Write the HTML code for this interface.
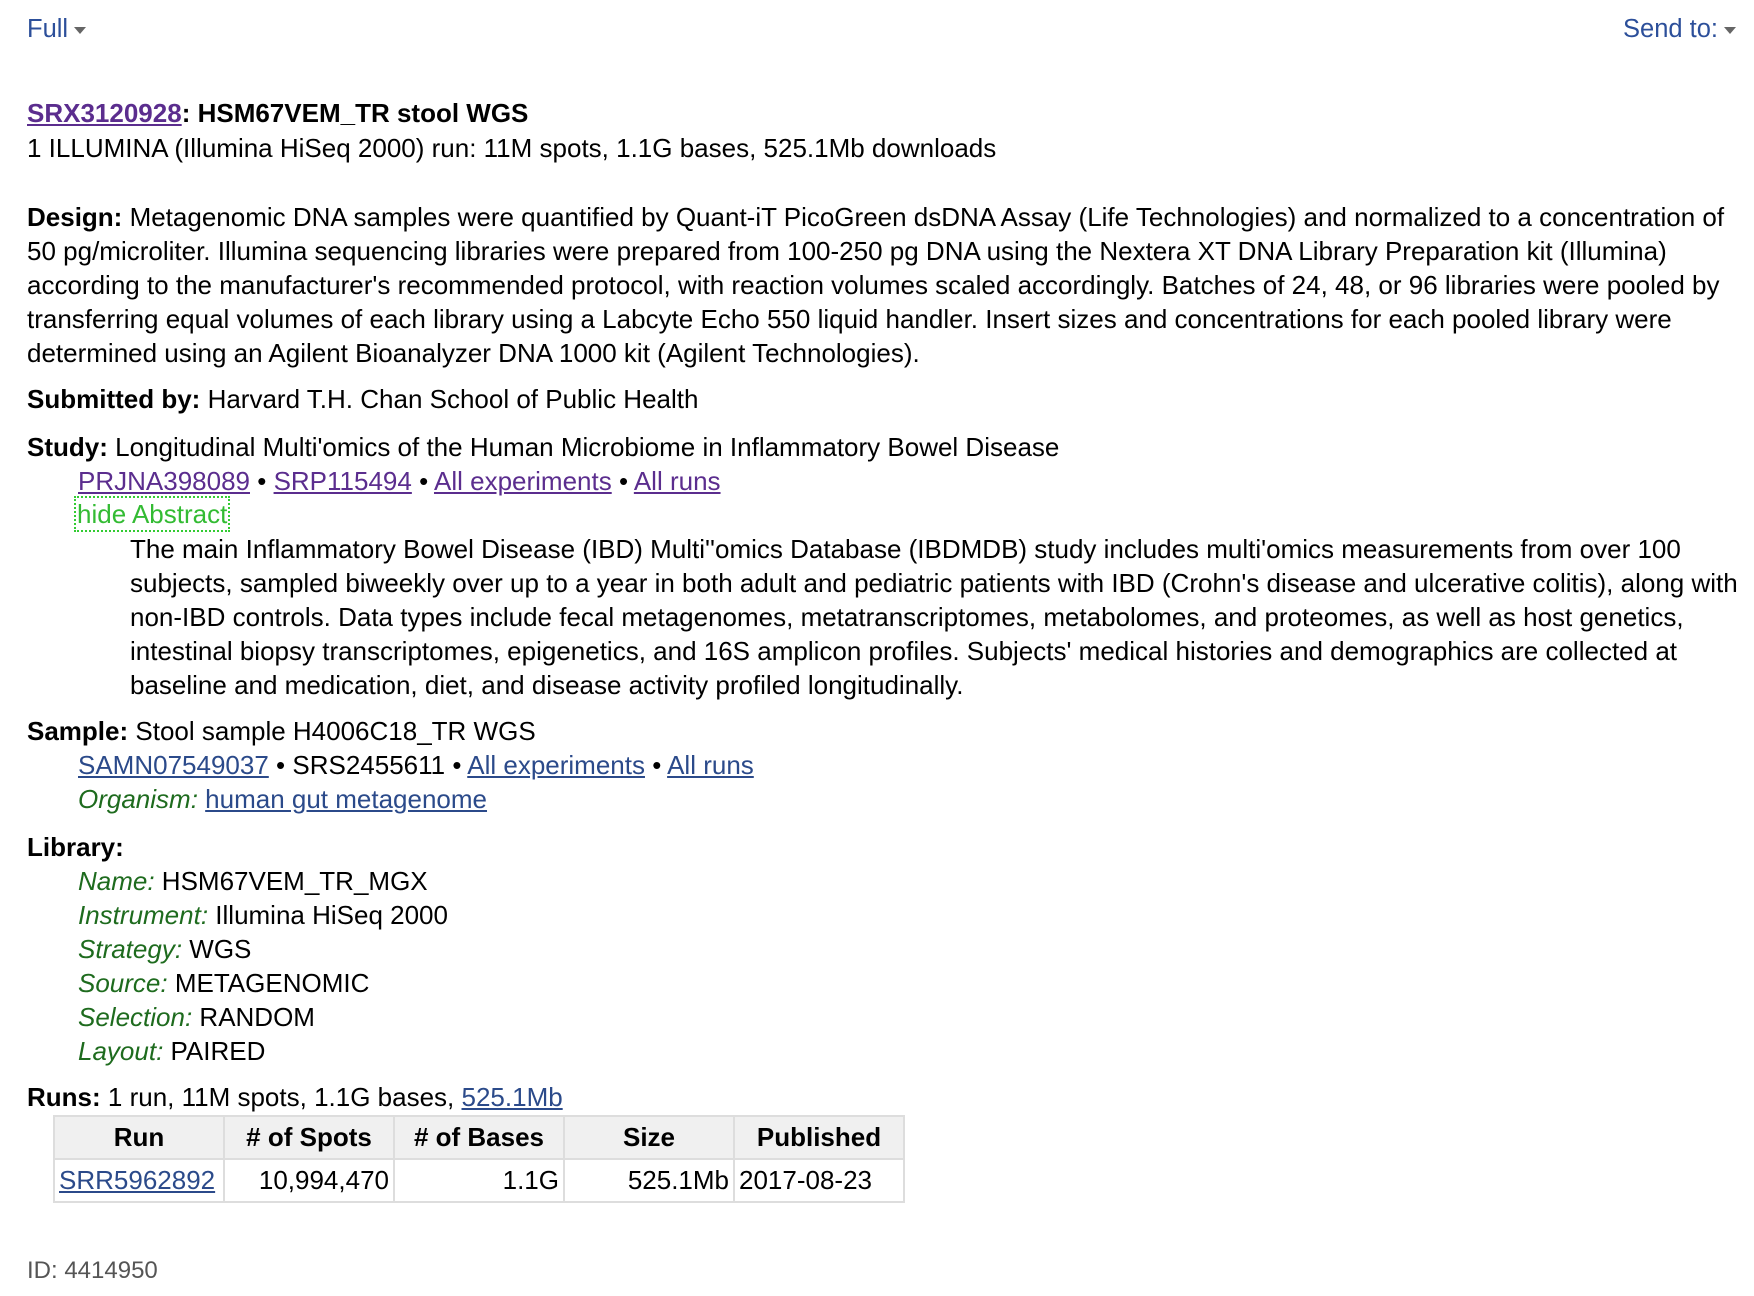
<!DOCTYPE html>
<html><head><meta charset="utf-8"><style>
body{margin:0;width:1754px;height:1296px;background:#fff;font-family:"Liberation Sans",Arial,sans-serif;font-size:26px;color:#000;position:relative;overflow:hidden}
.l{position:absolute;left:27px;line-height:34px;white-space:nowrap}
a{color:#2b4a8a;text-decoration:underline}
a.v{color:#5b2d8e}
b{font-weight:bold}
.g{color:#1e6b1e;font-style:italic}
.nav{color:#2c4f9a;position:absolute;top:15px;font-size:25.5px}
.tri{display:inline-block;width:0;height:0;border-left:6px solid transparent;border-right:6px solid transparent;border-top:7px solid #666;margin-left:6px;vertical-align:middle}
table{position:absolute;left:53px;top:1115px;border-collapse:collapse}
td,th{border:2px solid #ddd;height:41px;padding:0 4px;font-size:26px}
th{background:#f0f0f0;text-align:center}
</style></head><body>
<div class="nav" style="left:27px">Full<span class="tri"></span></div>
<div class="nav" style="right:18px">Send to:<span class="tri"></span></div>
<div class="l" style="top:96px"><b><a class="v" href="#">SRX3120928</a>: HSM67VEM_TR stool WGS</b></div>
<div class="l" style="top:131px">1 ILLUMINA (Illumina HiSeq 2000) run: 11M spots, 1.1G bases, 525.1Mb downloads</div>
<div class="l" style="top:200px"><b>Design:</b> Metagenomic DNA samples were quantified by Quant-iT PicoGreen dsDNA Assay (Life Technologies) and normalized to a concentration of</div>
<div class="l" style="top:234px">50 pg/microliter. Illumina sequencing libraries were prepared from 100-250 pg DNA using the Nextera XT DNA Library Preparation kit (Illumina)</div>
<div class="l" style="top:268px">according to the manufacturer's recommended protocol, with reaction volumes scaled accordingly. Batches of 24, 48, or 96 libraries were pooled by</div>
<div class="l" style="top:302px">transferring equal volumes of each library using a Labcyte Echo 550 liquid handler. Insert sizes and concentrations for each pooled library were</div>
<div class="l" style="top:336px">determined using an Agilent Bioanalyzer DNA 1000 kit (Agilent Technologies).</div>
<div class="l" style="top:382px"><b>Submitted by:</b> Harvard T.H. Chan School of Public Health</div>
<div class="l" style="top:430px"><b>Study:</b> Longitudinal Multi'omics of the Human Microbiome in Inflammatory Bowel Disease</div>
<div class="l" style="top:464px;left:78px"><a class="v" href="#">PRJNA398089</a> • <a class="v" href="#">SRP115494</a> • <a class="v" href="#">All experiments</a> • <a class="v" href="#">All runs</a></div>
<div class="l" style="top:498px;left:76px;color:#33bb33;outline:2px dotted #33cc33;line-height:32px;padding:0 1px">hide Abstract</div>
<div class="l" style="top:532px;left:130px">The main Inflammatory Bowel Disease (IBD) Multi''omics Database (IBDMDB) study includes multi'omics measurements from over 100</div>
<div class="l" style="top:566px;left:130px">subjects, sampled biweekly over up to a year in both adult and pediatric patients with IBD (Crohn's disease and ulcerative colitis), along with</div>
<div class="l" style="top:600px;left:130px">non-IBD controls. Data types include fecal metagenomes, metatranscriptomes, metabolomes, and proteomes, as well as host genetics,</div>
<div class="l" style="top:634px;left:130px">intestinal biopsy transcriptomes, epigenetics, and 16S amplicon profiles. Subjects' medical histories and demographics are collected at</div>
<div class="l" style="top:668px;left:130px">baseline and medication, diet, and disease activity profiled longitudinally.</div>
<div class="l" style="top:714px"><b>Sample:</b> Stool sample H4006C18_TR WGS</div>
<div class="l" style="top:748px;left:78px"><a href="#">SAMN07549037</a> • SRS2455611 • <a href="#">All experiments</a> • <a href="#">All runs</a></div>
<div class="l" style="top:782px;left:78px"><span class="g">Organism:</span> <a href="#">human gut metagenome</a></div>
<div class="l" style="top:830px"><b>Library:</b></div>
<div class="l" style="top:864px;left:78px"><span class="g">Name:</span> HSM67VEM_TR_MGX</div>
<div class="l" style="top:898px;left:78px"><span class="g">Instrument:</span> Illumina HiSeq 2000</div>
<div class="l" style="top:932px;left:78px"><span class="g">Strategy:</span> WGS</div>
<div class="l" style="top:966px;left:78px"><span class="g">Source:</span> METAGENOMIC</div>
<div class="l" style="top:1000px;left:78px"><span class="g">Selection:</span> RANDOM</div>
<div class="l" style="top:1034px;left:78px"><span class="g">Layout:</span> PAIRED</div>
<div class="l" style="top:1080px"><b>Runs:</b> 1 run, 11M spots, 1.1G bases, <a href="#">525.1Mb</a></div>
<table>
<tr><th style="width:160px">Run</th><th style="width:160px"># of Spots</th><th style="width:160px"># of Bases</th><th style="width:160px">Size</th><th style="width:160px">Published</th></tr>
<tr><td><a href="#">SRR5962892</a></td><td style="text-align:right">10,994,470</td><td style="text-align:right">1.1G</td><td style="text-align:right">525.1Mb</td><td>2017-08-23</td></tr>
</table>
<div class="l" style="top:1254px;color:#555;font-size:24px">ID: 4414950</div>
</body></html>
